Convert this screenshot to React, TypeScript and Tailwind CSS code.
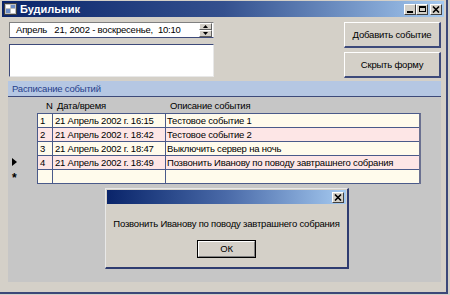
const rows = [
  { n: '1', date: '21 Апрель 2002 г. 16:15', text: 'Тестовое событие 1', pink: false, mark: '' },
  { n: '2', date: '21 Апрель 2002 г. 18:42', text: 'Тестовое событие 2', pink: true, mark: '' },
  { n: '3', date: '21 Апрель 2002 г. 18:47', text: 'Выключить сервер на ночь', pink: false, mark: '' },
  { n: '4', date: '21 Апрель 2002 г. 18:49', text: 'Позвонить Иванову по поводу завтрашнего собрания', pink: true, mark: 'current' },
  { n: '', date: '', text: '', pink: false, mark: 'new' },
];

function CaptionButton({ kind }: { kind: 'min' | 'max' | 'close' }) {
  return (
    <div className="w-[12px] h-[11px] bg-[#d4d0c8] border-t border-l border-t-white border-l-white border-b border-r border-b-[#404040] border-r-[#404040] flex items-center justify-center">
      {kind === 'min' && <div className="w-[6px] h-[2px] bg-black mt-[5px]" />}
      {kind === 'max' && <div className="w-[7px] h-[6px] border border-black border-t-2" />}
      {kind === 'close' && (
        <svg width="8" height="7" viewBox="0 0 8 7">
          <path d="M1 0.5 L7 6.5 M7 0.5 L1 6.5" stroke="black" strokeWidth="1.6" />
        </svg>
      )}
    </div>
  );
}

function Button({ label }: { label: string }) {
  return (
    <div className="w-[97px] h-[26px] bg-[#d4d0c8] border-t border-l border-t-white border-l-white border-b-2 border-r-2 border-b-[#3d4a7a] border-r-[#3d4a7a] flex items-center justify-center">
      {label}
    </div>
  );
}

export default function App() {
  return (
    <div className="relative w-[450px] h-[295px] overflow-hidden bg-[#d4d0c8] text-black text-[9.5px] tracking-[-0.2px] leading-none font-['Liberation_Sans',Arial,sans-serif]">
      <div className="w-[448px] h-[294px] border-r-2 border-b-2 border-r-[#3b4878] border-b-[#3b4878] flex flex-col">
        {/* title bar */}
        <div className="mx-[2px] mt-[1px] h-[16px] bg-gradient-to-r from-[#0a246a] via-[#34508e] to-[#a6caf0] flex items-center px-[2px]">
          <svg width="13" height="12" viewBox="0 0 13 12" className="mr-[3px]">
            <rect x="0.5" y="0.5" width="12" height="11" fill="#c0c0c0" stroke="#404040" />
            <rect x="2" y="2" width="4" height="3" fill="#ffffff" />
            <rect x="7" y="2" width="4" height="3" fill="#6b8cc7" />
            <rect x="2" y="6" width="4" height="4" fill="#6b8cc7" />
            <rect x="7" y="6" width="4" height="4" fill="#ffffff" />
          </svg>
          <span className="text-white font-bold text-[11px] tracking-normal">Будильник</span>
          <div className="ml-auto flex items-center">
            <CaptionButton kind="min" />
            <CaptionButton kind="max" />
            <div className="w-[2px]" />
            <CaptionButton kind="close" />
          </div>
        </div>

        <div className="pl-[8px] pr-[5px]">
          {/* top controls */}
          <div className="flex justify-between mt-[5px]">
            <div className="ml-[1px] flex flex-col">
              <div className="w-[205px] h-[16px] bg-white border border-t-[#808080] border-l-[#808080] border-r-[#e8e8e8] border-b-[#3d4a7a] flex items-center">
                <span className="pl-[6px] whitespace-pre">Апрель   21, 2002 - воскресенье,  10:10</span>
                <div className="ml-auto mr-[1px] flex flex-col">
                  <div className="w-[13px] h-[7px] bg-[#d4d0c8] border-t border-l border-t-white border-l-white border-b border-r border-b-[#606060] border-r-[#606060] flex items-center justify-center">
                    <svg width="5" height="3" viewBox="0 0 5 3"><path d="M2.5 0 L5 3 L0 3 Z" fill="black" /></svg>
                  </div>
                  <div className="w-[13px] h-[7px] bg-[#d4d0c8] border-t border-l border-t-white border-l-white border-b border-r border-b-[#606060] border-r-[#606060] flex items-center justify-center">
                    <svg width="5" height="3" viewBox="0 0 5 3"><path d="M0 0 L5 0 L2.5 3 Z" fill="black" /></svg>
                  </div>
                </div>
              </div>
              <div className="mt-[6px] w-[205px] h-[33px] bg-white border border-t-[#3d4a7a] border-l-[#3d4a7a] border-r-[#e8e8e8] border-b-[#e8e8e8]" />
            </div>
            <div className="flex flex-col gap-[4px]">
              <Button label="Добавить событие" />
              <Button label="Скрыть форму" />
            </div>
          </div>

          {/* group header */}
          <div className="mt-[3px] w-[433px] h-[16px] bg-[#b5c7e3] border-b border-b-[#3d4a7a] flex items-center pl-[4px]">
            <span className="text-[#26408c]">Расписание событий</span>
          </div>

          {/* grid area */}
          <div className="w-[433px] h-[185px] bg-[#c6c6c6] pt-[1px]">
            <div className="flex h-[15px] items-center">
              <div className="w-[38px]" />
              <div className="w-[11px]">N</div>
              <div className="w-[113px]">Дата/время</div>
              <div>Описание события</div>
            </div>
            <div className="flex">
              <div className="w-[29px] flex flex-col">
                {rows.map((r, i) => (
                  <div key={i} className="h-[14px] flex items-center pl-[4px]">
                    {r.mark === 'current' && (
                      <svg width="5" height="8" viewBox="0 0 5 8"><path d="M0 0 L5 4 L0 8 Z" fill="black" /></svg>
                    )}
                    {r.mark === 'new' && <span className="text-[12px] font-bold leading-none mt-[3px]">*</span>}
                  </div>
                ))}
              </div>
              <div className="w-[384px] border-t border-l border-r-2 border-[#4a5a8a] border-r-[#6a7090]">
                {rows.map((r, i) => (
                  <div
                    key={i}
                    className={`flex h-[14px] border-b border-b-[#4a5a8a] ${r.pink ? 'bg-[#fde6e6]' : 'bg-[#fffbec]'}`}
                  >
                    <div className="w-[15px] border-r border-r-[#4a5a8a] flex items-center pl-[2px]">{r.n}</div>
                    <div className="w-[113px] border-r border-r-[#4a5a8a] flex items-center pl-[2px] whitespace-nowrap">{r.date}</div>
                    <div className="flex-1 flex items-center pl-[1px] whitespace-nowrap">{r.text}</div>
                  </div>
                ))}
              </div>
            </div>
          </div>
        </div>
      </div>

      {/* message box */}
      <div className="absolute left-[105px] top-[188px] w-[244px] h-[81px] bg-[#d4d0c8] border border-t-[#e8e8e8] border-l-[#e8e8e8] border-r-2 border-b-2 border-r-[#2f3c70] border-b-[#2f3c70] p-[1px] flex flex-col">
        <div className="h-[14px] bg-gradient-to-r from-[#0a246a] via-[#4a6aa8] to-[#a6caf0] flex items-center justify-end pr-[2px]">
          <CaptionButton kind="close" />
        </div>
        <div className="mt-[15px] text-center whitespace-nowrap">Позвонить Иванову по поводу завтрашнего собрания</div>
        <div className="mt-[11px] flex justify-center">
          <div className="w-[59px] h-[18px] border border-black">
            <div className="w-full h-full border-t border-l border-t-white border-l-white border-b border-r border-b-[#808080] border-r-[#808080] flex items-center justify-center">
              ОК
            </div>
          </div>
        </div>
      </div>
    </div>
  );
}
